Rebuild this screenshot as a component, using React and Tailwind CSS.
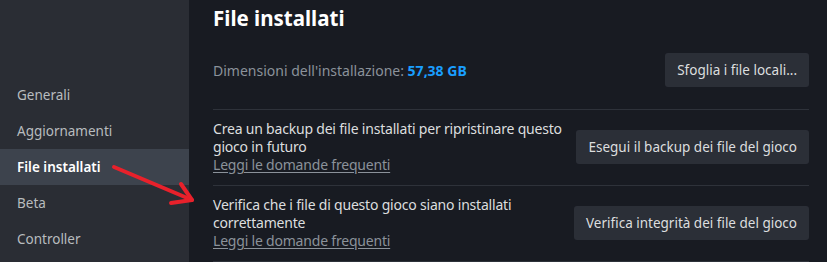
import React from "react";

const navItems = ["Generali", "Aggiornamenti", "File installati", "Beta", "Controller"];

function Row({ text, action }) {
  return (
    <div className="flex items-center justify-between border-b border-[#2e323a] pt-[10px] pb-[11px]">
      <div className="min-w-0 flex-1 text-[14px] leading-[18px] tracking-[-0.2px] text-[#dcdedf]">
        <p>{text}</p>
        <a href="#" className="block text-[#8b929a] underline underline-offset-2">
          Leggi le domande frequenti
        </a>
      </div>
      <button className="h-[34px] shrink-0 whitespace-nowrap rounded-[3px] bg-[#2b2f37] px-3 text-[13.5px] text-[#dcdedf]">
        {action}
      </button>
    </div>
  );
}

export default function App() {
  return (
    <div
      className="relative flex h-[262px] w-[827px] overflow-hidden bg-[#181b22]"
      style={{ fontFamily: '"Noto Sans", "Open Sans", sans-serif' }}
    >
      <aside className="flex w-[189px] shrink-0 flex-col bg-[#2a2d34] pt-[77px]">
        {navItems.map((item) => (
          <div
            key={item}
            className={`flex h-9 items-center px-[17px] text-[13.5px] ${
              item === "File installati"
                ? "bg-[#3d434d] font-semibold text-white"
                : "text-[#b8bcbf]"
            }`}
          >
            {item}
          </div>
        ))}
      </aside>

      <main className="min-w-0 flex-1 pl-6 pr-[18px]">
        <h1 className="pt-[3px] text-[20.5px] font-bold leading-[30px] text-white">
          File installati
        </h1>
        <div className="mt-5 flex items-center justify-between border-b border-[#2e323a] pb-[22px]">
          <span className="text-[14px] text-[#8b929a]">
            Dimensioni dell'installazione:{" "}
            <span className="font-bold text-[#1a9fff]">57,38 GB</span>
          </span>
          <button className="h-[34px] whitespace-nowrap rounded-[3px] bg-[#2b2f37] px-3 text-[13.5px] text-[#dcdedf]">
            Sfoglia i file locali...
          </button>
        </div>
        <Row
          text="Crea un backup dei file installati per ripristinare questo gioco in futuro"
          action="Esegui il backup dei file del gioco"
        />
        <Row
          text="Verifica che i file di questo gioco siano installati correttamente"
          action="Verifica integrità dei file del gioco"
        />
      </main>

      <svg
        className="absolute left-[108px] top-[160px]"
        width="95"
        height="50"
        viewBox="108 160 95 50"
        fill="none"
        stroke="#e8212b"
        strokeWidth="4"
        strokeLinecap="round"
        strokeLinejoin="round"
      >
        <path d="M114 167 L192 200" />
        <path d="M181 184 L192 200 L171 203" />
      </svg>
    </div>
  );
}
